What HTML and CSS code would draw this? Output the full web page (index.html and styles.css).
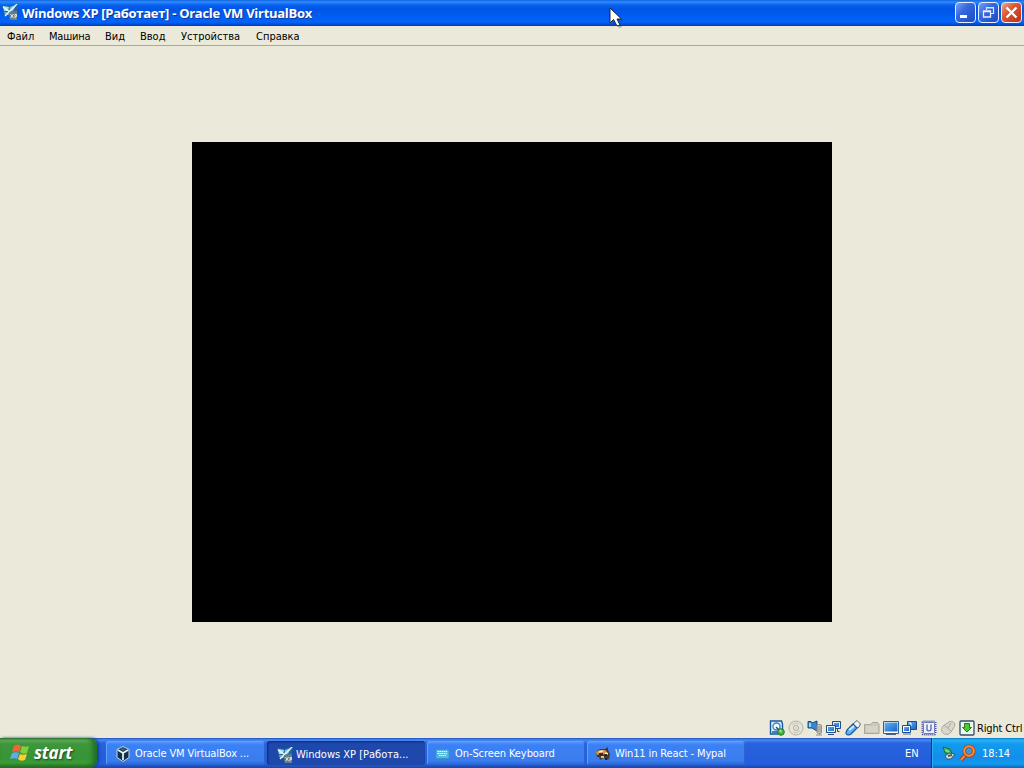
FILE: index.html
```html
<!DOCTYPE html>
<html lang="ru">
<head>
<meta charset="utf-8">
<title>Windows XP [Работает] - Oracle VM VirtualBox</title>
<link rel="stylesheet" href="styles.css">
</head>
<body>
<svg class="defs" aria-hidden="true">
  <defs>
    <linearGradient id="sky" x1="0" y1="0" x2="1" y2="1"><stop offset="0" stop-color="#9be0f5"/><stop offset="1" stop-color="#2b82c4"/></linearGradient>
    <linearGradient id="screen" x1="0" y1="0" x2="1" y2="1"><stop offset="0" stop-color="#64b4f4"/><stop offset="1" stop-color="#1763c8"/></linearGradient>
    <symbol id="vm-xp" viewBox="0 0 16 16">
      <path d="M0 1l7 1 9-2-1 8v8H7v-4L2 11z" fill="#276890"/>
      <path d="M1 2l6 1-1 4-4 0z" fill="#a4def0"/><path d="M8 3l6-2-3 6-4 1z" fill="#75c5e9"/>
      <path d="M2 8l4 0 1 3-4 0z" fill="#62aed3"/><path d="M15 0L7 8 3 12M1 3l7 5" stroke="#eefaff" stroke-width="1.3"/>
      <path d="M7 8l8-1v9H8z" fill="#697b86"/><path d="M8.500 10l3 4M11.500 10l-3 4M13 14.500v-4h1.500v2H13" stroke="#dfe7e8" fill="none"/>
    </symbol>
  </defs>
</svg>
<div class="desktop">
  <header class="titlebar">
    <svg class="title-icon"><use href="#vm-xp"/></svg>
    <h1 class="title">Windows XP [Работает] - Oracle VM VirtualBox</h1>
    <div class="controls">
      <span class="control"><svg viewBox="0 0 19 19"><path d="M4 13.500h7" stroke="#fff" stroke-width="3"/></svg></span>
      <span class="control"><svg viewBox="0 0 19 19"><path d="M7.500 7V4.500h7v6H12M7 5h8" fill="none" stroke="#d7e5ff" stroke-width="1.200"/><path d="M4.500 8h7v6h-7zM4 8.500h8" fill="none" stroke="#e7f0ff" stroke-width="1.300"/></svg></span>
      <span class="control close"><svg viewBox="0 0 19 19"><path d="M4.500 4.500l10 10m0-10l-10 10" stroke="#fff" stroke-width="2.300"/></svg></span>
    </div>
  </header>
  <nav class="menu">
    <span class="m1">Файл</span><span class="m2">Машина</span><span class="m3">Вид</span><span class="m4">Ввод</span><span class="m5">Устройства</span><span class="m6">Справка</span>
  </nav>
  <main class="stage"><div class="guest"></div></main>
  <footer class="status">
    <div class="indicators">
      <svg viewBox="0 0 16 16"><path d="M1.500 1h11l1 3v10h-12z" fill="#d7efff" stroke="#17599a" stroke-width="1.400"/><circle cx="7.500" cy="6.500" r="3.500" fill="#fff" stroke="#3d82bd" stroke-width="1.400"/><path d="M7 7l3 3M3 12h6" stroke="#17599a" stroke-width="1.500"/><circle cx="12" cy="12" r="3.300" fill="#49b53c" stroke="#287c2b"/><circle cx="11.500" cy="11" r="1.200" fill="#9bea90"/></svg>
      <svg viewBox="0 0 16 16"><circle cx="8" cy="8" r="7" fill="#e6e4d9" stroke="#b5b2a7"/><path d="M4 5a5 5 0 0 1 7-1M5 12a5 5 0 0 0 7-2" fill="none" stroke="#c6c3b9"/><circle cx="8" cy="8" r="2.500" fill="#f4f2e8" stroke="#aaa79d"/><circle cx="8" cy="8" r=".7" fill="#999"/></svg>
      <svg viewBox="0 0 16 16"><path d="M1 1.500h3l1 1.500 5-2v10L5 8H1z" fill="#368bd0" stroke="#174b82"/><path d="M2 3h2v4H2z" fill="#9bd5f5"/><rect x="10" y="4.500" width="4.500" height="9" rx="1.500" fill="#c6c5bb" stroke="#96948a"/><path d="M10 7h5M10 9h5M10 11h5M12.500 13v2M9 15h6" stroke="#96948a"/></svg>
      <svg viewBox="0 0 16 16"><path d="M6.500 1.500h8v7h-8z" fill="url(#screen)" stroke="#244b82"/><path d="M7.500 2.500h6v5h-6z" fill="none" stroke="#d9f0ff"/><path d="M11.500 9v2.500h2" stroke="#244b82" fill="none"/><path d="M.5 5.500h9v7h-9z" fill="url(#screen)" stroke="#244b82"/><path d="M1.500 6.500h7v5h-7z" fill="none" stroke="#f1f7ff"/><path d="M2 14.500h6" stroke="#244b82"/></svg>
      <svg viewBox="0 0 16 16"><path d="M9 3l3-2.500L15.500 4 14 7l-2 1-4-4z" fill="#f3f3f1" stroke="#52677a"/><path d="M8 4l4 4-6 6c-2 1.500-5 1-5-1 0-1 1-2 1-3z" fill="#64b4ee" stroke="#16599f" stroke-width="1.300"/><path d="M4 10l5-4" stroke="#d6f1ff" stroke-width="1.700"/></svg>
      <svg viewBox="0 0 16 16"><path d="M.5 13.500v-9h6l2-2h5l1.500 2v9z" fill="#cbc9be" stroke="#a9a79d"/><path d="M2 6h12v6H2z" fill="#d5d2c6"/></svg>
      <svg viewBox="0 0 16 16"><path d="M.5 1.500h15v12H.5z" fill="#fff" stroke="#29619a"/><path d="M1.500 2.500h13v9h-13z" fill="url(#screen)"/><path d="M3 14.500h10" stroke="#496582"/></svg>
      <svg viewBox="0 0 16 16"><path d="M5.500 1.500h9v8h-9z" fill="url(#screen)" stroke="#214984"/><path d="M7 3h2v3" stroke="#fff" fill="none"/><path d="M.5 5.500h8v7h-8z" fill="#fff" stroke="#214984"/><path d="M2 7h5v4H2z" fill="url(#screen)"/><path d="M1 14h8" stroke="#5870a0"/></svg>
      <svg viewBox="0 0 16 16"><rect x="1.500" y="1.500" width="13" height="13" rx="1" fill="#e1e6fa" stroke="#42539d" stroke-width="2" stroke-dasharray="1 1"/><rect x="2.500" y="2.500" width="11" height="11" rx="1" fill="#eef1ff" stroke="#6978b7"/><path d="M6 4.500V9c0 2.500 4 2.500 4 0V4.500" fill="none" stroke="#5263af" stroke-width="1.300"/></svg>
      <svg viewBox="0 0 16 16"><path d="M3 6l6-4c3-2 7 1 5.500 4.500L11 12c-2 3-6 3-8 1-2-2-2-5 0-7z" fill="#d9d7cc" stroke="#aaa89e"/><path d="M4 5l7 6M8 8l3-5" stroke="#aaa89e"/></svg>
      <svg viewBox="0 0 16 16"><rect x="1" y="1" width="14" height="14" rx="1" fill="#edf8e9" stroke="#334e6c" stroke-width="1.300"/><path d="M5.500 3.500h5v4h2L8 12 3.500 7.500h2z" fill="#51c733" stroke="#217b24"/></svg>
    </div>
    <span class="hostkey">Right Ctrl</span>
  </footer>
  <div class="taskbar">
    <div class="start">
      <svg viewBox="0 0 20 20"><path d="M4 3c3-2 5-1 7 0L9 9C7 8 5 8 2 9z" fill="#f26634"/><path d="M12 3c3 1 5 1 7 0l-2 7c-3 1-5 1-7-1z" fill="#83cf3e"/><path d="M2 10c3-1 5-1 7 0l-2 6c-2-1-4-1-7 0z" fill="#5faaf4"/><path d="M10 11c2 1 4 1 7 0l-2 6c-3 1-5 1-7-1z" fill="#f9cf3a"/></svg>
      <span class="start-label">start</span>
    </div>
    <div class="tasks">
      <div class="task"><svg viewBox="0 0 16 16"><path d="M8 .5l6 3v8l-6 4-6-4v-8z" fill="#122f48" stroke="#bcd7e8"/><path d="M3 4l5 3 5-3M8 7v7" fill="none" stroke="#e5f6ff" stroke-width="1.700"/><path d="M5 3l3-1 3 1-3 2z" fill="#426784"/></svg><span class="t1">Oracle VM VirtualBox ...</span></div>
      <div class="task active"><svg><use href="#vm-xp"/></svg><span class="t2">Windows XP [Работа...</span></div>
      <div class="task"><svg viewBox="0 0 16 16"><rect x="1" y="3.500" width="13" height="9" rx="1" fill="#55b9de" stroke="#3796cc"/><path d="M2.500 5.500h10M2.500 7.500h10M4 9.500h7" stroke="#dcffff" stroke-dasharray="1.500 .5"/></svg><span class="t3">On-Screen Keyboard</span></div>
      <div class="task"><svg viewBox="0 0 16 16"><path d="M1 6l4-3 5 0 3-2 0 3 2 4-1 5-3 1-2-2-4 2-1-3-2 0z" fill="#4b382d"/><path d="M1 6l4-2 5 0 3 3-2 2-5-1-4 1z" fill="#d7934e"/><path d="M4 6l4-1M10 7l3 1M6 11l3 0" stroke="#fff1c2" stroke-width="1.500"/><path d="M4 8h4M9 9h3M11 12v2" stroke="#16171c" stroke-width="1.500"/></svg><span class="t4">Win11 in React - Mypal</span></div>
    </div>
    <span class="lang">EN</span>
    <div class="tray">
      <svg viewBox="0 0 18 18"><path d="M3 3l7 2 2 5-7-1z" fill="#42bd53" stroke="#176d4b"/><path d="M5 6l4 2" stroke="#b4efba"/><path d="M5 12l4-3 6 1-4 5-4 0z" fill="#d5e0df" stroke="#365769"/><path d="M8 12l4-1" stroke="#405e68" stroke-width="2"/></svg>
      <svg viewBox="0 0 18 18"><path d="M8 10l-5 6" stroke="#9c3d18" stroke-width="4"/><path d="M8 10l-5 6" stroke="#fc8430" stroke-width="2"/><circle cx="11" cy="7" r="4.800" fill="#3699dc" stroke="#a6421b" stroke-width="3.500"/><circle cx="11" cy="7" r="4.800" fill="none" stroke="#ff8b35" stroke-width="2"/></svg>
      <span class="clock">18:14</span>
    </div>
  </div>
  <svg class="cursor" viewBox="0 0 16 24"><path d="M3 3v17l4-4 3 5 3-1-3-5h5z" fill="#29468a" opacity=".35"/><path d="M1 1v15l3.500-3.500L8 19l3-1-3-6h4.500z" fill="#fff" stroke="#152344"/></svg>
</div>
</body>
</html>
```
FILE: styles.css
```css
* { box-sizing: border-box; }
body { margin: 0; overflow: hidden; background: #ebe9d9; font: 11px/14px "DejaVu Sans Condensed", "DejaVu Sans", sans-serif; font-stretch: condensed; color: #000; }
svg { display: block; flex: none; }
span { white-space: nowrap; }
.defs { position: absolute; width: 0; height: 0; }
.desktop { position: relative; width: 1024px; height: 768px; display: flex; flex-direction: column; }
.titlebar { height: 26px; display: flex; align-items: center; padding: 0 2px; background: linear-gradient(#1764df 0, #2b8cff 2px, #0861ed 5px, #0055e5 9px, #005ff5 18px, #0464fa 22px, #0046c9 25px, #0038b0 26px); }
.title-icon { width: 16px; height: 16px; margin-top: -2px; }
.title { margin: 0 0 0 4px; flex: 1; color: #fff; font: bold 13px/18px "Open Sans", sans-serif; font-stretch: normal; letter-spacing: -.29px; text-shadow: 1px 1px #0b3a9d; white-space: nowrap; }
.controls { display: flex; gap: 2px; margin-top: -1px; }
.control { width: 21px; height: 21px; border: 1px solid #e5efff; border-radius: 4px; background: linear-gradient(135deg, #76a0f6, #3568df 40%, #174dc6); }
.control svg { width: 19px; height: 19px; }
.close { background: linear-gradient(135deg, #f0a28a, #dd5733 40%, #bd3212); }
.menu { height: 20px; display: flex; gap: 15px; padding: 4px 7px 0; border-bottom: 1px solid #aca899; line-height: 14px; }
.m1 { width: 27px; } .m2 { width: 41px; letter-spacing: -.2px; } .m3 { width: 20px; } .m4 { width: 26px; } .m5 { width: 60px; } .m6 { width: 44px; }
.stage { height: 672px; display: grid; place-items: center; }
.guest { width: 640px; height: 480px; background: #000; }
.status { height: 20px; display: flex; align-items: center; padding-left: 769px; gap: 2px; }
.indicators { display: flex; gap: 3px; }
.indicators svg { width: 16px; height: 16px; }
.hostkey { margin-top: 1px; letter-spacing: -.15px; }
.taskbar { height: 30px; display: flex; background: linear-gradient(#1d4fbd 0, #4b8bf3 2px, #2864df 5px, #245edb 20px, #245fe0 26px, #1a46a8 30px); }
.start { width: 97px; display: flex; align-items: center; padding-left: 10px; border-radius: 0 8px 8px 0; background: linear-gradient(#2b7829 0, #65b35f 2px, #3d963c 6px, #379534 20px, #3b9c38 25px, #216c20 30px); box-shadow: inset -4px 0 5px #216d25, 2px 0 3px #1740a0; }
.start svg { width: 20px; height: 20px; }
.start-label { margin: -1px 0 0 4px; color: #fff; font: italic bold 17px/20px "Open Sans", sans-serif; letter-spacing: -.2px; text-shadow: 1px 1px 2px #1d451e; }
.tasks { display: flex; gap: 2px; padding: 3px 0 2px 9px; width: 808px; }
.task { width: 158px; height: 24px; display: flex; align-items: center; gap: 4px; padding: 1px 0 0 8px; color: #fff; border-radius: 3px; background: linear-gradient(#5a9bff, #3c81f3 4px, #397cee 20px, #2a62d1); box-shadow: inset 1px 1px #60a0ff, inset -1px 0 #2d64ce; }
.task:first-child { width: 159px; padding-left: 9px; }
.task.active { background: #1e48ab; box-shadow: inset 1px 1px 2px #102b78; padding: 3px 0 0 10px; gap: 3px; }
.task svg { width: 16px; height: 16px; }
.t1, .t4 { letter-spacing: -.13px; }
.t3 { letter-spacing: -.08px; }
.lang { width: 26px; margin-top: 9px; color: #fff; }
.tray { flex: 1; display: flex; align-items: center; padding-left: 8px; color: #fff; background: linear-gradient(#0b75c8 0, #24b4f5 2px, #139aee 6px, #118eea 20px, #1598ee 26px, #0b66bb 30px); border-left: 1px solid #0b397e; box-shadow: inset 1px 0 #25b2ef; }
.tray svg { width: 18px; height: 18px; }
.clock { margin: 2px 0 0 6px; letter-spacing: -.1px; }
.cursor { position: absolute; left: 609px; top: 7px; width: 16px; height: 24px; }
```
